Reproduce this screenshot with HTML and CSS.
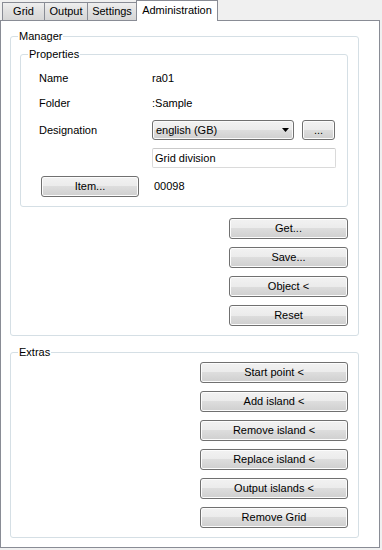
FILE: index.html
```html
<!DOCTYPE html>
<html>
<head>
	<meta http-equiv="Content-Type" content="text/html; charset=UTF-8">
	<title>Administration</title>
	<link rel="stylesheet" href="styles.css">
</head>
<body>

<div class="tabs">
	<div class="tab tab-grid">Grid</div>
	<div class="tab tab-output">Output</div>
	<div class="tab tab-settings">Settings</div>
	<div class="tab tab-admin active">Administration</div>
</div>

<div class="panel">
	<fieldset class="group manager">
		<legend>Manager</legend>

		<fieldset class="group props">
			<legend>Properties</legend>
			<div class="props-grid">
				<div class="lbl">Name</div>
				<div class="val">ra01</div>

				<div class="lbl">Folder</div>
				<div class="val">:Sample</div>

				<div class="lbl">Designation</div>
				<div class="val row">
					<div class="combo">
						<span>english (GB)</span>
						<svg class="arrow" width="7" height="4" viewBox="0 0 7 4"><path d="M0 0h7L3.5 4z" fill="#000"/></svg>
					</div>
					<div class="btn btn-dots">...</div>
				</div>

				<div class="lbl"></div>
				<div class="val"><div class="textbox">Grid division</div></div>

				<div class="lbl"><div class="btn btn-item">Item...</div></div>
				<div class="val num">00098</div>
			</div>
		</fieldset>

		<div class="stack stack-manager">
			<div class="btn">Get...</div>
			<div class="btn">Save...</div>
			<div class="btn">Object &lt;</div>
			<div class="btn">Reset</div>
		</div>
	</fieldset>

	<fieldset class="group extras">
		<legend>Extras</legend>
		<div class="stack stack-extras">
			<div class="btn">Start point &lt;</div>
			<div class="btn">Add island &lt;</div>
			<div class="btn">Remove island &lt;</div>
			<div class="btn">Replace island &lt;</div>
			<div class="btn">Output islands &lt;</div>
			<div class="btn">Remove Grid</div>
		</div>
	</fieldset>
</div>

</body>
</html>
```

FILE: styles.css
```css
html { background: #f0f0f0; margin: 0; padding: 0; }
body { margin: 0; font-family: "Liberation Sans", Arial, sans-serif; font-size: 11px; color: #000; }

.tabs { display: flex; align-items: flex-end; height: 20px; padding-left: 2px; }
.tab { height: 17px; line-height: 17px; border: 1px solid #898c95; border-bottom: none; margin-right: -1px; text-align: center; box-sizing: content-box; background: linear-gradient(#efefef, #e0e0e0 50%, #d6d6d6); }
.tab-grid { width: 41px; }
.tab-output { width: 42px; }
.tab-settings { width: 48px; }
.tab-admin { width: 80px; }
.tab.active { position: relative; z-index: 1; height: 20px; line-height: 18px; background: #fff; margin-bottom: -1px; }

.panel { height: 526px; border: 1px solid #898c95; background: #fff; padding: 0 0 0 9px; box-sizing: content-box; width: 369px; }

.group { border: 1px solid #d5dfe5; border-radius: 3px; margin: 0; box-sizing: border-box; width: 349px; }
.group legend { padding: 0 1px; margin-left: -2px; line-height: 13px; }
.manager { margin-top: 9px; padding: 5px 10px 9px 9px; }
.props { width: 328px; padding: 0 0 6px 0; }
.props legend { margin-left: 7px; }
.extras { margin-top: 10px; padding: 3px 10px 9px 9px; }

.props-grid { display: grid; grid-template-columns: 113px 1fr; grid-template-rows: 25px 25px 29px 28px 28px; align-items: center; padding: 4px 0 0 18px; }
.row { display: flex; gap: 8px; }
.num { padding-left: 2px; }

.combo { width: 142px; height: 20px; box-sizing: border-box; border: 1px solid #707070; border-radius: 3px; display: flex; align-items: center; justify-content: space-between; padding: 0 3px 0 3px; background: linear-gradient(#f2f2f2, #ebebeb 50%, #dddddd 50%, #cfcfcf); box-shadow: inset 0 0 0 1px #fafafa; }
.arrow { margin-right: 1px; }
.textbox { width: 184px; height: 20px; box-sizing: border-box; border: 1px solid #dadada; border-top-color: #c9c9c9; border-radius: 2px; padding: 0 2px; line-height: 18px; }

.btn { height: 21px; box-sizing: border-box; border: 1px solid #707070; border-radius: 3px; text-align: center; line-height: 19px; background: linear-gradient(#f2f2f2, #ebebeb 50%, #dddddd 50%, #cfcfcf); box-shadow: inset 0 0 0 1px #fcfcfc; }
.btn-dots { width: 33px; height: 20px; line-height: 18px; }
.btn-item { width: 98px; margin-left: 2px; }

.stack { display: flex; flex-direction: column; align-items: flex-end; gap: 8px; }
.stack-manager { margin-top: 11px; }
.stack-manager .btn { width: 119px; }
.stack-extras .btn { width: 148px; }
```
